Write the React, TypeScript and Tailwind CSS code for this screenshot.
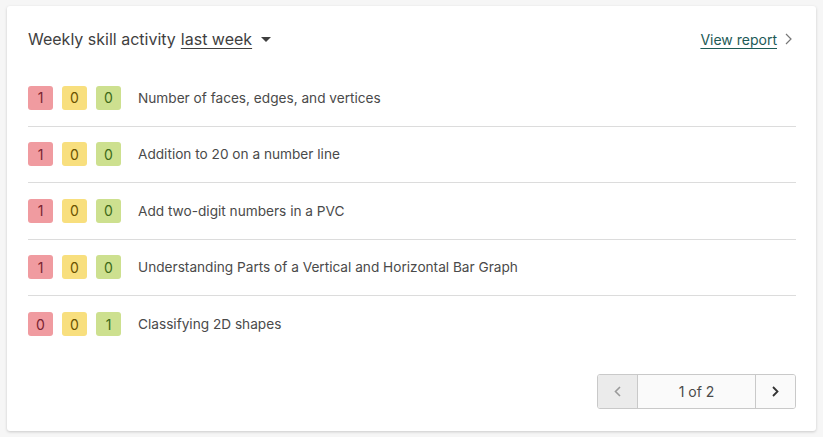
import React from "react";

const rows: { r: number; y: number; g: number; label: string }[] = [
  { r: 1, y: 0, g: 0, label: "Number of faces, edges, and vertices" },
  { r: 1, y: 0, g: 0, label: "Addition to 20 on a number line" },
  { r: 1, y: 0, g: 0, label: "Add two-digit numbers in a PVC" },
  { r: 1, y: 0, g: 0, label: "Understanding Parts of a Vertical and Horizontal Bar Graph" },
  { r: 0, y: 0, g: 1, label: "Classifying 2D shapes" },
];

function Badge({ n, cls }: { n: number; cls: string }) {
  return (
    <div className={`w-[25px] h-[24px] rounded-[3px] flex items-center justify-center text-[14px] ${cls}`}>
      {n}
    </div>
  );
}

export default function App() {
  return (
    <div
      className="w-[823px] h-[437px] bg-[#f6f6f6] pt-[6px] pl-[7px]"
      style={{ fontFamily: 'Inter, "Liberation Sans", Arial, sans-serif' }}
    >
      <div className="w-[809px] h-[425px] bg-white rounded-[3px] shadow-[0_1px_3px_rgba(0,0,0,0.18)] pl-[21px] pr-[20px] pt-[22px] flex flex-col">
        <div className="flex items-center justify-between h-[22px]">
          <div className="flex items-center text-[16px] text-[#3f3f3f]">
            <span>Weekly skill activity</span>
            <span className="ml-[5px] underline underline-offset-[3px] decoration-1">last week</span>
            <svg width="10" height="6" viewBox="0 0 10 6" className="ml-[9px] mt-[2px]">
              <path d="M0 0 L10 0 L5 5 Z" fill="#3f3f3f" />
            </svg>
          </div>
          <div className="flex items-center mr-[4px]">
            <span className="text-[14px] text-[#1d5a56] underline underline-offset-[3px] decoration-1">View report</span>
            <svg width="7" height="12" viewBox="0 0 7 12" className="ml-[8px]">
              <path d="M1 1 L6 6 L1 11" fill="none" stroke="#777" strokeWidth="1.2" />
            </svg>
          </div>
        </div>
        <div className="mt-[20px] flex flex-col">
          {rows.map((row, i) => (
            <div
              key={i}
              className={`h-[56.5px] flex items-center ${i < rows.length - 1 ? "border-b border-[#dcdcdc]" : ""}`}
            >
              <div className="flex gap-[9px]">
                <Badge n={row.r} cls="bg-[#f09ba0] text-[#7a2331]" />
                <Badge n={row.y} cls="bg-[#f8df7e] text-[#6b5300]" />
                <Badge n={row.g} cls="bg-[#cde08f] text-[#3d6a17]" />
              </div>
              <span className="ml-[17px] text-[13.65px] text-[#4a4a4a]">{row.label}</span>
            </div>
          ))}
        </div>
        <div className="mt-auto mb-[22px] flex justify-end">
          <div className="flex h-[35px] border border-[#c9c9c9] rounded-[3px] overflow-hidden">
            <div className="w-[40px] bg-[#ebebeb] border-r border-[#c9c9c9] flex items-center justify-center">
              <svg width="7" height="11" viewBox="0 0 7 11">
                <path d="M6 1 L1.5 5.5 L6 10" fill="none" stroke="#9a9a9a" strokeWidth="1.6" />
              </svg>
            </div>
            <div className="w-[117px] bg-[#fafafa] flex items-center justify-center text-[14px] text-[#4a4a4a]">
              1 of 2
            </div>
            <div className="w-[40px] bg-[#fafafa] border-l border-[#c9c9c9] flex items-center justify-center">
              <svg width="7" height="11" viewBox="0 0 7 11">
                <path d="M1 1 L5.5 5.5 L1 10" fill="none" stroke="#333" strokeWidth="1.8" />
              </svg>
            </div>
          </div>
        </div>
      </div>
    </div>
  );
}
